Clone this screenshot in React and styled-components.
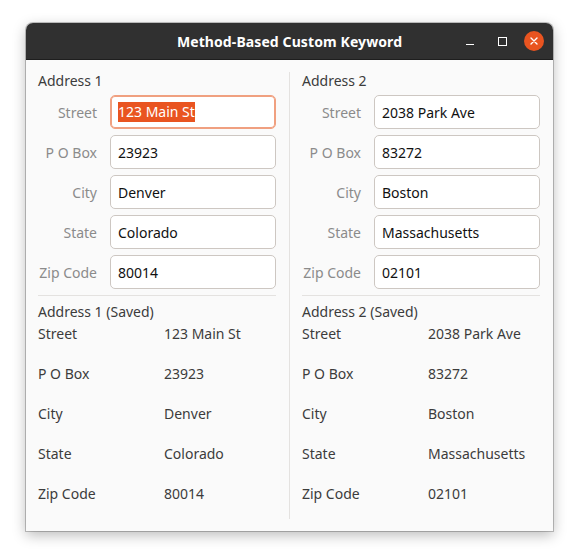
import React from 'react';
import styled, { createGlobalStyle } from 'styled-components';

const GlobalStyle = createGlobalStyle`
  html, body {
    margin: 0;
    padding: 0;
    background: #ffffff;
  }
  body {
    font-family: "Noto Sans", "Open Sans", sans-serif;
  }
`

const Page = styled.div`
  padding: 23px 0 0 26px;
  width: 579px;
  height: 560px;
  box-sizing: border-box;
`

const Window = styled.div`
  width: 527px;
  height: 508px;
  background: #fafafa;
  border-radius: 7px 7px 0 0;
  box-shadow: 0 0 0 1px rgba(0, 0, 0, 0.22), 0 4px 14px rgba(0, 0, 0, 0.28);
  display: flex;
  flex-direction: column;
  overflow: hidden;
`

const HeaderBar = styled.div`
  height: 36px;
  background: #303030;
  border-bottom: 1px solid #1e1e1e;
  position: relative;
  display: flex;
  align-items: center;
  justify-content: center;
  flex-shrink: 0;
`

const Title = styled.div`
  color: #ffffff;
  font-size: 14px;
  font-weight: 700;
  letter-spacing: 0.1px;
`

const Controls = styled.div`
  position: absolute;
  right: 9px;
  top: 0;
  bottom: 0;
  display: flex;
  align-items: center;
  gap: 12px;
`

const CtrlButton = styled.div`
  width: 20px;
  height: 20px;
  display: flex;
  align-items: center;
  justify-content: center;
  border-radius: 50%;
  background: ${p => (p.$close ? '#e95420' : 'transparent')};
`

const Body = styled.div`
  flex: 1;
  display: grid;
  grid-template-columns: 238px 1fr 238px;
  padding: 0 13px 0 12px;
`

const Divider = styled.div`
  width: 1px;
  background: #e4e2e0;
  margin: 12px 0 12px 13px;
`

const Column = styled.div`
  display: flex;
  flex-direction: column;
  padding-top: 11px;
`

const Heading = styled.div`
  font-size: 14px;
  color: #3c3c3c;
  height: 20px;
  line-height: 20px;
`

const Form = styled.div`
  display: grid;
  grid-template-columns: 59px 166px;
  column-gap: 13px;
  row-gap: 6px;
  margin-top: 4px;
`

const FieldLabel = styled.div`
  font-size: 14px;
  color: #8b8b8b;
  display: flex;
  align-items: center;
  justify-content: flex-end;
  white-space: nowrap;
`

const Entry = styled.div`
  height: 34px;
  box-sizing: border-box;
  background: #ffffff;
  border: 1px solid ${p => (p.$focused ? '#f0a080' : '#cdc7c2')};
  box-shadow: ${p => (p.$focused ? 'inset 0 0 0 1px #f0a080' : 'none')};
  border-radius: 5px;
  padding: 0 7px;
  display: flex;
  align-items: center;
  font-size: 14px;
  color: #111111;
  white-space: nowrap;
`

const Selected = styled.span`
  background: #e95420;
  color: #ffffff;
  line-height: 20px;
`

const Separator = styled.div`
  height: 1px;
  background: #e4e2e0;
  margin: 6px 0 6px;
`

const SavedList = styled.div`
  display: grid;
  grid-template-columns: 126px 1fr;
  row-gap: 20px;
  margin-top: 2px;
`

const SavedText = styled.div`
  font-size: 14px;
  color: #3c3c3c;
  height: 20px;
  line-height: 20px;
  white-space: nowrap;
`

const fields = ['Street', 'P O Box', 'City', 'State', 'Zip Code']

const addresses = [
  { name: 'Address 1', values: ['123 Main St', '23923', 'Denver', 'Colorado', '80014'], focus: 0 },
  { name: 'Address 2', values: ['2038 Park Ave', '83272', 'Boston', 'Massachusetts', '02101'], focus: -1 },
]

function AddressColumn({ address }) {
  return (
    <Column>
      <Heading>{address.name}</Heading>
      <Form>
        {fields.map((f, i) => (
          <React.Fragment key={f}>
            <FieldLabel>{f}</FieldLabel>
            <Entry $focused={address.focus === i}>
              {address.focus === i ? <Selected>{address.values[i]}</Selected> : address.values[i]}
            </Entry>
          </React.Fragment>
        ))}
      </Form>
      <Separator />
      <Heading>{address.name} (Saved)</Heading>
      <SavedList>
        {fields.map((f, i) => (
          <React.Fragment key={f}>
            <SavedText>{f}</SavedText>
            <SavedText>{address.values[i]}</SavedText>
          </React.Fragment>
        ))}
      </SavedList>
    </Column>
  )
}

export default function App() {
  return (
    <Page>
      <GlobalStyle />
      <Window>
        <HeaderBar>
          <Title>Method-Based Custom Keyword</Title>
          <Controls>
            <CtrlButton>
              <svg width="10" height="10" viewBox="0 0 10 10">
                <line x1="1" y1="8.5" x2="9" y2="8.5" stroke="#fff" strokeWidth="1" />
              </svg>
            </CtrlButton>
            <CtrlButton>
              <svg width="10" height="10" viewBox="0 0 10 10">
                <rect x="1.5" y="1.5" width="8" height="8" fill="none" stroke="#fff" strokeWidth="1" />
              </svg>
            </CtrlButton>
            <CtrlButton $close>
              <svg width="10" height="10" viewBox="0 0 10 10">
                <path d="M2 2 L8 8 M8 2 L2 8" stroke="#fff" strokeWidth="1.4" strokeLinecap="round" />
              </svg>
            </CtrlButton>
          </Controls>
        </HeaderBar>
        <Body>
          <AddressColumn address={addresses[0]} />
          <Divider />
          <AddressColumn address={addresses[1]} />
        </Body>
      </Window>
    </Page>
  )
}
